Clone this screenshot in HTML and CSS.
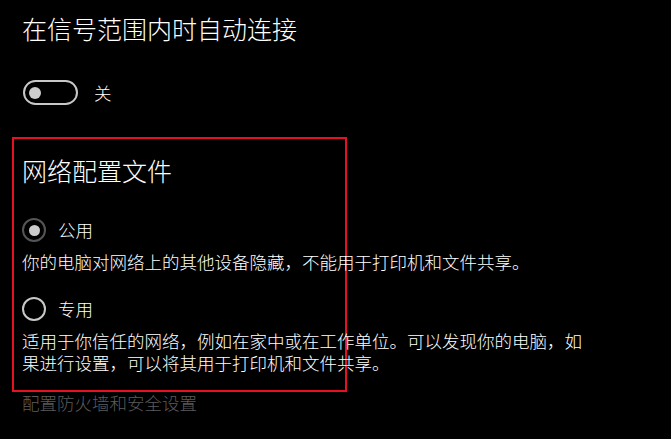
FILE: index.html
```html
<!DOCTYPE html>
<html lang="zh-CN">
<head>
<meta charset="utf-8">
<link rel="stylesheet" href="styles.css">
</head>
<body>
<div class="page">
  <h1 class="title">在信号范围内时自动连接</h1>
  <div class="toggle-row">
    <span class="toggle"><span class="knob"></span></span>
    <span class="toggle-label">关</span>
  </div>
  <section class="profile">
    <h2 class="title">网络配置文件</h2>
    <div class="radio-row first">
      <span class="radio checked"><span class="dot"></span></span>
      <span class="radio-label">公用</span>
    </div>
    <p class="desc">你的电脑对网络上的其他设备隐藏，不能用于打印机和文件共享。</p>
    <div class="radio-row second">
      <span class="radio"></span>
      <span class="radio-label">专用</span>
    </div>
    <p class="desc">适用于你信任的网络，例如在家中或在工作单位。可以发现你的电脑，如果进行设置，可以将其用于打印机和文件共享。</p>
  </section>
  <div class="link">配置防火墙和安全设置</div>
</div>
</body>
</html>
```
FILE: styles.css
```css
html, body {
  margin: 0;
  padding: 0;
  background: #000;
}
body {
  width: 671px;
  height: 439px;
  overflow: hidden;
  color: #fff;
  font-family: "Noto Sans CJK SC", "Noto Sans", sans-serif;
  font-weight: 300;
}
.page {
  padding: 12px 0 0 22px;
}
.title {
  margin: 0;
  font-size: 25px;
  font-weight: 300;
  line-height: 32px;
}
.toggle-row {
  display: flex;
  align-items: center;
  gap: 16px;
  margin-top: 36px;
  margin-left: 1px;
}
.toggle {
  box-sizing: border-box;
  width: 55px;
  height: 25px;
  border: 2.5px solid #c8c8c8;
  border-radius: 13px;
  display: flex;
  align-items: center;
  padding-left: 4px;
}
.knob {
  width: 12px;
  height: 12px;
  border-radius: 50%;
  background: #cccccc;
}
.toggle-label {
  font-size: 17.5px;
  line-height: 25px;
}
.profile {
  box-sizing: border-box;
  width: 335px;
  height: 255px;
  margin: 32px 0 0 -10px;
  border: 2px solid #e81123;
  padding: 15px 0 0 8px;
}
.radio-row {
  display: flex;
  align-items: center;
  gap: 12px;
  height: 24px;
}
.radio-row.first {
  margin-top: 32px;
}
.radio-row.second {
  margin-top: 24px;
}
.radio {
  box-sizing: border-box;
  width: 24px;
  height: 24px;
  border-radius: 50%;
  border: 2.5px solid #c8c8c8;
  display: flex;
  align-items: center;
  justify-content: center;
}
.radio.checked {
  border-color: #555;
}
.dot {
  width: 11px;
  height: 11px;
  border-radius: 50%;
  background: #cccccc;
}
.radio-label {
  font-size: 17.5px;
  line-height: 24px;
}
.desc {
  width: 570px;
  margin: 9px 0 0;
  font-size: 17.5px;
  line-height: 22px;
}
.link {
  color: #5c5c5c;
  font-size: 17.5px;
  line-height: 22px;
}
```
